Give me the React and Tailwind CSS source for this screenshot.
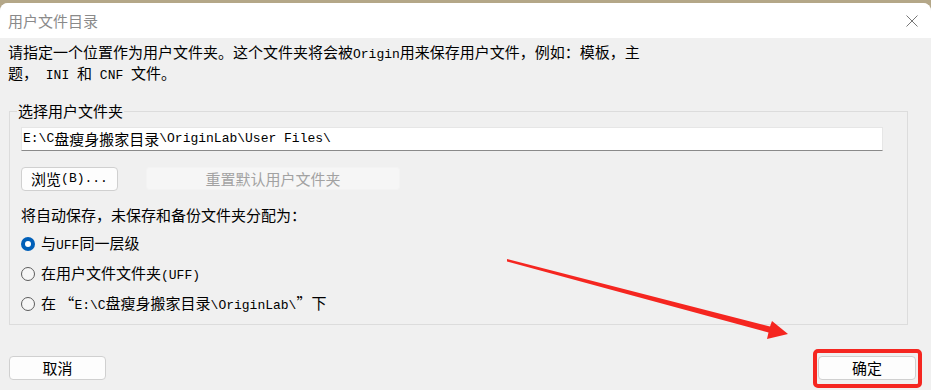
function M({ children }) {
  return <span className="font-['Liberation_Mono',monospace] text-[13px]">{children}</span>;
}

function Radio({ checked, children }) {
  return (
    <div className="flex h-[30px] items-center">
      {checked ? (
        <span className="flex h-[14px] w-[14px] items-center justify-center rounded-full bg-[#005fb8]">
          <span className="h-[6px] w-[6px] rounded-full bg-white" />
        </span>
      ) : (
        <span className="h-[14px] w-[14px] rounded-full border border-[#5d5d5d] bg-[#f6f6f6]" />
      )}
      <span className="ml-[6px]">{children}</span>
    </div>
  );
}

export default function App() {
  return (
    <div className="relative h-[390px] w-[931px] overflow-hidden bg-[#b4a788] font-['Noto_Sans_CJK_SC',sans-serif] text-[15px] leading-[18px] text-black">
      <div className="h-[3px]" />
      <div className="flex h-[calc(100%-3px)] flex-col rounded-t-[8px] bg-[#f0f0f0]">
        {/* title bar */}
        <div className="flex h-[35px] items-center justify-between rounded-t-[8px] bg-white pl-[8px] pr-[13px]">
          <span className="text-[#8a8a8a]">用户文件目录</span>
          <svg width="12" height="12" viewBox="0 0 12 12" className="text-[#777]">
            <path d="M0.5 0.5 L11.5 11.5 M11.5 0.5 L0.5 11.5" stroke="currentColor" strokeWidth="1" fill="none" />
          </svg>
        </div>

        <div className="pl-[8px] pr-[23px] pt-[5px]">
          <p>
            请指定一个位置作为用户文件夹。这个文件夹将会被<M>Origin</M>用来保存用户文件，例如：模板，主
            <br />
            题，<M> INI </M>和<M> CNF </M>文件。
          </p>

          <fieldset className="ml-[1px] mt-[17px] border border-[#dcdcdc] pb-[5px] pl-[11px] pr-[24px]">
            <legend className="ml-[-4px] px-[1px]">选择用户文件夹</legend>
            <div className="mt-[7px] flex h-[24px] items-center border border-[#e6e6e6] border-b-[#8a8a8a] bg-white pl-[1px]">
              <M>E:\C</M>盘瘦身搬家目录<M>\OriginLab\User Files\</M>
            </div>
            <div className="mt-[16px] flex gap-[28px]">
              <button className="flex h-[24px] w-[97px] items-center justify-center rounded-[4px] border border-[#d0d0d0] bg-[#fdfdfd]">
                浏览<M>(B)...</M>
              </button>
              <button className="flex h-[23px] w-[254px] items-center justify-center rounded-[3px] border border-[#f3f3f3] bg-[#f6f6f6] text-[#a2a2a2]">
                重置默认用户文件夹
              </button>
            </div>
            <p className="mt-[15px]">将自动保存，未保存和备份文件夹分配为：</p>
            <div className="mt-[5px]">
              <Radio checked>
                与<M>UFF</M>同一层级
              </Radio>
              <Radio>
                在用户文件文件夹<M>(UFF)</M>
              </Radio>
              <Radio>
                在 “<M>E:\C</M>盘瘦身搬家目录<M>\OriginLab\</M>”下
              </Radio>
            </div>
          </fieldset>
        </div>

        <div className="mt-[31px] flex justify-between pl-[9px] pr-[15px]">
          <button className="flex h-[24px] w-[97px] items-center justify-center rounded-[4px] border border-[#d0d0d0] bg-[#fdfdfd]">
            取消
          </button>
          <button className="flex h-[24px] w-[98px] items-center justify-center rounded-[4px] border border-[#d0d0d0] bg-[#fdfdfd]">
            确定
          </button>
        </div>
      </div>

      {/* annotation: red box + arrow */}
      <div className="pointer-events-none absolute left-[813px] top-[349px] h-[39px] w-[109px] rounded-[5px] border-[4px] border-[#f52620]" />
      <svg className="pointer-events-none absolute left-0 top-0" width="931" height="390" viewBox="0 0 931 390">
        <polygon
          points="507,259 770,326.5 772,321 788,334 767,339 768.5,332.5 507,261.5"
          fill="#f52620"
        />
      </svg>
    </div>
  );
}
